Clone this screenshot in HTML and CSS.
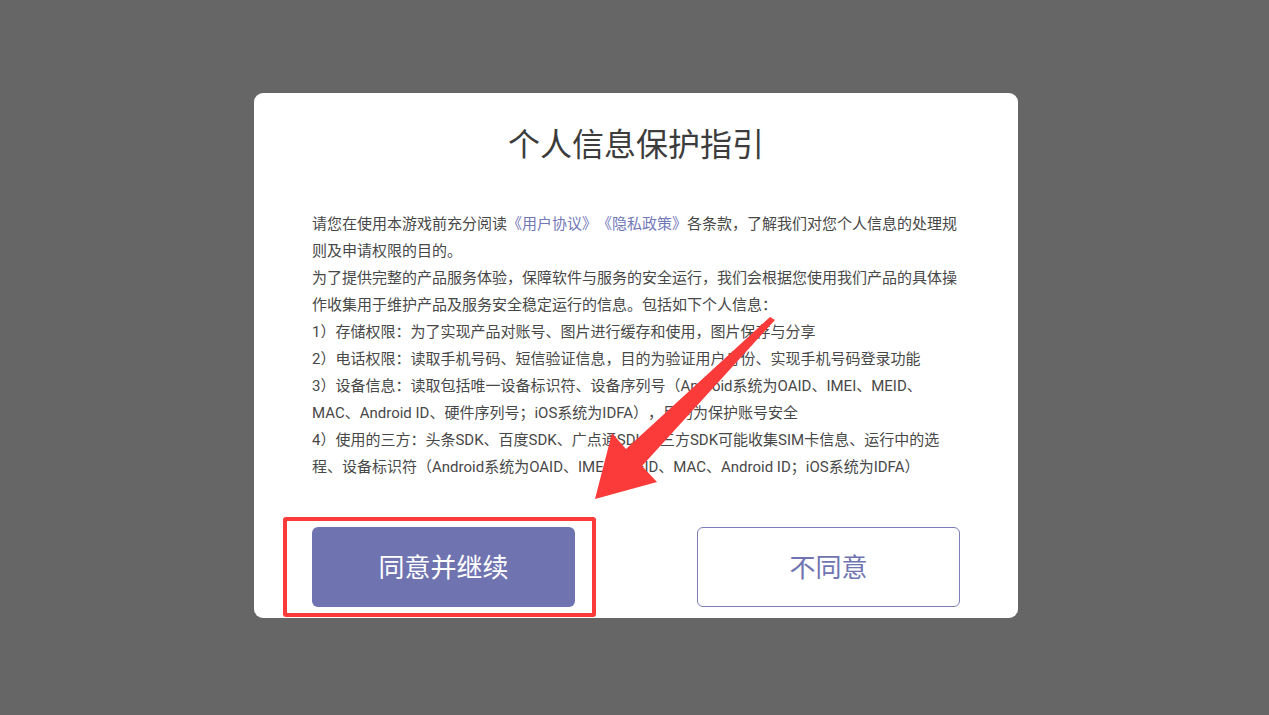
FILE: index.html
```html
<!DOCTYPE html>
<html lang="zh-CN">
<head>
    <meta charset="UTF-8">
    <meta name="viewport" content="width=device-width, initial-scale=1.0">
    <title>个人信息保护指引</title>
    <link rel="stylesheet" href="styles.css">
</head>
<body>
    <div id="container">
        <div class="dialog">
            <h1>个人信息保护指引</h1>
            <div class="content">
                <p>请您在使用本游戏前充分阅读<a href="#">《用户协议》</a><a href="#">《隐私政策》</a>各条款，了解我们对您个人信息的处理规则及申请权限的目的。</p>
                <p>为了提供完整的产品服务体验，保障软件与服务的安全运行，我们会根据您使用我们产品的具体操作收集用于维护产品及服务安全稳定运行的信息。包括如下个人信息：</p>
                <p>1）存储权限：为了实现产品对账号、图片进行缓存和使用，图片保存与分享</p>
                <p>2）电话权限：读取手机号码、短信验证信息，目的为验证用户身份、实现手机号码登录功能</p>
                <p>3）设备信息：读取包括唯一设备标识符、设备序列号（Android系统为OAID、IMEI、MEID、MAC、Android ID、硬件序列号；iOS系统为IDFA），目的为保护账号安全</p>
                <p>4）使用的三方：头条SDK、百度SDK、广点通SDK，三方SDK可能收集SIM卡信息、运行中的选程、设备标识符（Android系统为OAID、IMEI、MEID、MAC、Android ID；iOS系统为IDFA）</p>
            </div>
            <div class="actions">
                <button class="btn btn-primary">同意并继续</button>
                <button class="btn btn-outline">不同意</button>
            </div>

            <!-- annotation overlay -->
            <div class="mark-box"></div>
            <svg class="mark-arrow" width="764" height="525" viewBox="0 0 764 525">
                <polygon points="516,224 521,227 388,373 403,389 341,406 358,340 372,356" fill="#fb3a3a"/>
            </svg>
        </div>
    </div>
</body>
</html>
```

FILE: styles.css
```css
body {
    margin: 0;
    padding: 0;
    font-family: Roboto, "Noto Sans CJK SC", sans-serif;
    background-color: #666;
}
#container {
    height: 715px;
    padding: 93px 0 0 254px;
    box-sizing: border-box;
}
.dialog {
    position: relative;
    width: 764px;
    height: 525px;
    box-sizing: border-box;
    padding: 25px 58px 0;
    background-color: #fff;
    border-radius: 9px;
}
h1 {
    margin: 0;
    font-family: "Noto Sans CJK SC", sans-serif;
    font-size: 32px;
    font-weight: 400;
    line-height: 48px;
    text-align: center;
    color: #3c3c3c;
}
.content {
    margin-top: 45px;
    font-size: 15px;
    line-height: 27px;
    color: #484848;
    text-spacing-trim: space-all;
}
.content p {
    margin: 0;
}
.content a {
    color: #7278b8;
    text-decoration: none;
}
.actions {
    margin-top: 46px;
    display: flex;
    justify-content: space-between;
}
.btn {
    width: 263px;
    height: 80px;
    padding: 0 0 4px;
    border-radius: 6px;
    font-family: "Noto Sans CJK SC", sans-serif;
    font-size: 26px;
    cursor: pointer;
}
.btn-primary {
    background-color: #6f74b1;
    color: #fff;
    border: none;
}
.btn-outline {
    background-color: #fff;
    color: #6f74b1;
    border: 1px solid #7a7fb8;
}
.mark-box {
    position: absolute;
    left: 29px;
    top: 424px;
    width: 313px;
    height: 100px;
    box-sizing: border-box;
    border: 4px solid #fb3a3a;
    border-radius: 3px;
    pointer-events: none;
}
.mark-arrow {
    position: absolute;
    left: 0;
    top: 0;
    pointer-events: none;
}
```
